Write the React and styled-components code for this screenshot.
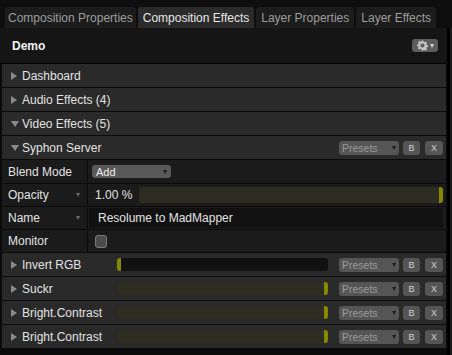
import React from 'react';
import styled, { createGlobalStyle } from 'styled-components';

const GlobalStyle = createGlobalStyle`
    body {
        margin: 0;
        background: #0e0e0e;
        font-family: 'Liberation Sans', Arial, sans-serif;
    }
`;

const tabs = ['Composition Properties', 'Composition Effects', 'Layer Properties', 'Layer Effects'];

const effects = [
    { name: 'Invert RGB', value: 0 },
    { name: 'Suckr', value: 1 },
    { name: 'Bright.Contrast', value: 1 },
    { name: 'Bright.Contrast', value: 1 },
];

function Arrow({ open }) {
    return (
        <ArrowBox>
            {open
                ? <svg width="8" height="6" viewBox="0 0 8 6"><path d="M0 0 L8 0 L4 6 Z" fill="#8a8a8a" /></svg>
                : <svg width="6" height="8" viewBox="0 0 6 8"><path d="M0 0 L6 4 L0 8 Z" fill="#8a8a8a" /></svg>}
        </ArrowBox>
    );
}

function Gear() {
    return (
        <svg width="11" height="11" viewBox="0 0 24 24">
            <path
                fill="#c4c4c4"
                d="M10 1h4l.6 3.1 2 .9 2.7-1.8 2.8 2.8-1.8 2.7.9 2 3.1.6v4l-3.1.6-.9 2 1.8 2.7-2.8 2.8-2.7-1.8-2 .9L14 23h-4l-.6-3.1-2-.9-2.7 1.8-2.8-2.8 1.8-2.7-.9-2L0 14v-4l3.1-.6.9-2L2.2 4.7 5 1.9l2.7 1.8 2-.9zM12 7.5a4.5 4.5 0 1 0 0 9 4.5 4.5 0 1 0 0-9z"
            />
        </svg>
    );
}

function Controls() {
    return (
        <ControlBox>
            <PresetSelect>Presets<Caret>▾</Caret></PresetSelect>
            <SmallButton>B</SmallButton>
            <SmallButton $wide>X</SmallButton>
        </ControlBox>
    );
}

export default function App() {
    return (
        <Root>
            <GlobalStyle />
            <TabBar>
                {tabs.map((t, i) => (
                    <Tab key={t} $active={i === 1} $tight={i === 0}>{t}</Tab>
                ))}
            </TabBar>
            <Body>
                <Panel>
                    <Header>
                        <Title>Demo</Title>
                        <GearButton><Gear /><Caret $light>▾</Caret></GearButton>
                    </Header>
                    <GroupRow><Arrow /><RowLabel>Dashboard</RowLabel></GroupRow>
                    <GroupRow><Arrow /><RowLabel>Audio Effects (4)</RowLabel></GroupRow>
                    <GroupRow><Arrow open /><RowLabel>Video Effects (5)</RowLabel></GroupRow>
                    <GroupRow>
                        <Arrow open /><RowLabel>Syphon Server</RowLabel>
                        <Controls />
                    </GroupRow>

                    <ParamRow $tall>
                        <ParamLabel>Blend Mode</ParamLabel>
                        <ParamValue $pad={4}>
                            <BlendSelect>Add<Caret>▾</Caret></BlendSelect>
                        </ParamValue>
                    </ParamRow>
                    <ParamRow>
                        <ParamLabel>Opacity<Caret $dim>▾</Caret></ParamLabel>
                        <ParamValue $pad={7}>
                            <Amount>1.00 %</Amount>
                            <Track $height={16}>
                                <Fill style={{ width: '100%' }} />
                            </Track>
                        </ParamValue>
                    </ParamRow>
                    <ParamRow>
                        <ParamLabel>Name<Caret $dim>▾</Caret></ParamLabel>
                        <ParamValue $pad={1}>
                            <NameField>Resolume to MadMapper</NameField>
                        </ParamValue>
                    </ParamRow>
                    <ParamRow>
                        <ParamLabel>Monitor</ParamLabel>
                        <ParamValue $pad={7}>
                            <Checkbox />
                        </ParamValue>
                    </ParamRow>

                    {effects.map((e, i) => (
                        <GroupRow key={i}>
                            <EffectName><Arrow /><RowLabel>{e.name}</RowLabel></EffectName>
                            <Track $height={13} $width={211}>
                                <Fill style={{ width: `${e.value * 100}%` }} />
                            </Track>
                            <Controls />
                        </GroupRow>
                    ))}
                </Panel>
                <Scroll />
            </Body>
        </Root>
    );
}

const Root = styled.div`
    width: 452px;
    height: 355px;
    background: #0e0e0e;
    display: flex;
    flex-direction: column;
    overflow: hidden;
    font-size: 12px;
`;

const TabBar = styled.div`
    display: flex;
    gap: 2px;
    padding: 7px 0 0 5px;
`;

const Tab = styled.div`
    height: 21px;
    padding: 0 ${p => (p.$tight ? '3px' : '5px')};
    display: flex;
    align-items: center;
    border-radius: 3px 3px 0 0;
    background: ${p => (p.$active ? '#2b2b2b' : '#1c1c1c')};
    color: ${p => (p.$active ? '#e6e6e6' : '#9c9c9c')};
    white-space: nowrap;
`;

const Body = styled.div`
    flex: 1;
    display: flex;
`;

const Panel = styled.div`
    width: 447px;
    background: #0b0b0b;
    display: flex;
    flex-direction: column;
`;

const Scroll = styled.div`
    flex: 1;
    border-left: 3px solid #000;
    background: #1b1b1b;
`;

const Header = styled.div`
    height: 35px;
    background: #151515;
    border-bottom: 1px solid #050505;
    display: flex;
    align-items: center;
    justify-content: space-between;
    padding: 0 9px 0 12px;
`;

const Title = styled.div`
    color: #f2f2f2;
    font-weight: bold;
`;

const GearButton = styled.div`
    width: 26px;
    height: 13px;
    border-radius: 3px;
    background: #5c5c5c;
    display: flex;
    align-items: center;
    justify-content: center;
    gap: 2px;
`;

const Caret = styled.span`
    font-size: 8px;
    line-height: 1;
    color: ${p => (p.$light ? '#d0d0d0' : p.$dim ? '#6a6a6a' : '#1a1a1a')};
    margin-left: ${p => (p.$light ? '0' : 'auto')};
`;

const GroupRow = styled.div`
    height: 23px;
    margin: 0 1px 0 2px;
    background: #2a2a2a;
    border-bottom: 1px solid #0a0a0a;
    display: flex;
    align-items: center;
    padding: 0 3px 0 9px;
    color: #e2e2e2;
`;

const ArrowBox = styled.span`
    width: 8px;
    display: flex;
    align-items: center;
    margin-right: 3px;
`;

const RowLabel = styled.span`
    white-space: nowrap;
`;

const EffectName = styled.div`
    width: 106px;
    display: flex;
    align-items: center;
`;

const ControlBox = styled.div`
    margin-left: auto;
    display: flex;
    align-items: center;
    gap: 4px;
`;

const PresetSelect = styled.div`
    width: 60px;
    height: 14px;
    box-sizing: border-box;
    padding: 0 3px;
    border-radius: 3px;
    background: #555;
    color: #9a9a9a;
    font-size: 10.5px;
    display: flex;
    align-items: center;
`;

const SmallButton = styled.div`
    width: ${p => (p.$wide ? '18px' : '17px')};
    height: 14px;
    margin-left: ${p => (p.$wide ? '1px' : '0')};
    border-radius: 3px;
    background: #555;
    color: #cfcfcf;
    font-size: 9px;
    display: flex;
    align-items: center;
    justify-content: center;
`;

const ParamRow = styled.div`
    height: ${p => (p.$tall ? '23px' : '22px')};
    margin: 0 1px 0 2px;
    display: grid;
    grid-template-columns: 86px 1fr;
    background: #1b1b1b;
    border-bottom: 1px solid #0a0a0a;
    color: #e2e2e2;
`;

const ParamLabel = styled.div`
    display: flex;
    align-items: center;
    padding: 0 7px 0 6px;
    border-right: 1px solid #0a0a0a;
`;

const ParamValue = styled.div`
    display: flex;
    align-items: center;
    gap: 7px;
    padding: 0 3px 0 ${p => p.$pad}px;
`;

const BlendSelect = styled.div`
    width: 79px;
    height: 13px;
    box-sizing: border-box;
    padding: 0 4px 0 4px;
    border-radius: 3px;
    background: #595959;
    color: #ededed;
    font-size: 11px;
    display: flex;
    align-items: center;
`;

const Amount = styled.span`
    white-space: nowrap;
`;

const Track = styled.div`
    ${p => (p.$width ? `width: ${p.$width}px;` : 'flex: 1;')}
    height: ${p => p.$height}px;
    border-radius: 3px;
    background: #111;
    overflow: hidden;
    display: flex;
`;

const Fill = styled.div`
    box-sizing: border-box;
    min-width: 4px;
    height: 100%;
    background: #2d2d21;
    border-right: 4px solid #878700;
`;

const NameField = styled.div`
    flex: 1;
    height: 20px;
    background: #111;
    display: flex;
    align-items: center;
    padding-left: 9px;
`;

const Checkbox = styled.div`
    width: 10px;
    height: 11px;
    border-radius: 3px;
    background: #4c4c4c;
    border: 1px solid #7a7a7a;
`;
